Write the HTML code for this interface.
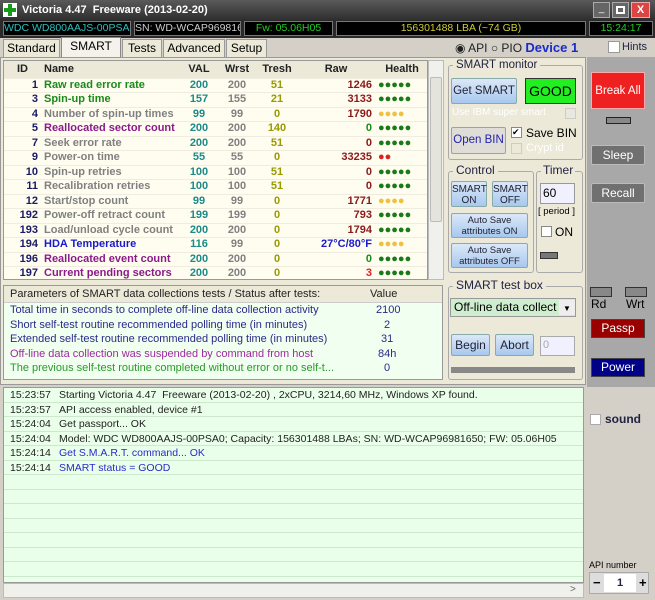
<!DOCTYPE html>
<html><head><style>
*{margin:0;padding:0;box-sizing:border-box}
body{width:655px;height:600px;overflow:hidden;background:#d4d0c8;font-family:"Liberation Sans",Tahoma,sans-serif;font-size:11px;position:relative}
.a{position:absolute;white-space:nowrap}
.title{left:0;top:0;width:655px;height:20px;background:linear-gradient(#5a5a5a,#2e2e2e);color:#fff;font-weight:bold;font-size:11px;line-height:20px;padding-left:22px}
.ib{top:21px;height:15px;background:#000;border:1px solid #777;font-size:10.5px;line-height:13px;text-align:center;overflow:hidden}
.tab{top:39px;height:18px;border:1px solid #999;border-bottom:none;background:#ece9d8;font-size:12px;line-height:17px;text-align:center}
table{border-collapse:collapse}
.sm td{height:14.5px;line-height:13px;border-bottom:1px solid #f0ede0;font-weight:bold;font-size:11px;padding:0 3px;white-space:nowrap}
.hd td{height:17px;background:#ece9d8;font-weight:bold;font-size:11px}
.btn{border:1px solid #8aa;border-radius:2px;background:linear-gradient(#dbe8f8,#a8c8ee);color:#223;text-align:center;font-size:11px}
.gb{border:1px solid #aaa;border-radius:3px}
.lg div{height:14.5px;border-bottom:1px solid #cde8cd;line-height:14px;font-size:10.5px;white-space:nowrap}
.lg span{display:inline-block;width:55px;padding-left:6px}
.dk{background:#707070;border:1px solid #bbb;border-radius:2px;color:#fff;text-align:center;font-size:12px}
</style></head><body>
<div class="a title">Victoria 4.47&nbsp; Freeware (2013-02-20)</div>
<div class="a" style="left:3px;top:3px;width:14px;height:14px;background:#fff"><div class="a" style="left:5px;top:1px;width:4px;height:12px;background:#1a9a1a"></div><div class="a" style="left:1px;top:5px;width:12px;height:4px;background:#1a9a1a"></div></div>
<div class="a" style="left:593px;top:2px;width:17px;height:16px;background:#666;border:1px solid #aaa;color:#fff;font-size:10px;text-align:center">_</div>
<div class="a" style="left:612px;top:2px;width:17px;height:16px;background:#666;border:1px solid #aaa"><div class="a" style="left:3px;top:3px;width:9px;height:8px;border:2px solid #fff"></div></div>
<div class="a" style="left:631px;top:2px;width:19px;height:16px;background:#d44;border:1px solid #eaa;color:#fff;font-weight:bold;text-align:center;line-height:14px">X</div>
<div class="a" style="left:0;top:20px;width:655px;height:18px;background:#2a2a2a"></div>
<div class="a ib" style="left:3px;width:128px;color:#3bb;">WDC WD800AAJS-00PSA0</div>
<div class="a ib" style="left:134px;width:107px;color:#ccc;">SN: WD-WCAP96981650</div>
<div class="a ib" style="left:244px;width:89px;color:#2c2;">Fw: 05.06H05</div>
<div class="a ib" style="left:336px;width:250px;color:#cc3;">156301488 LBA (~74 GB)</div>
<div class="a ib" style="left:589px;width:64px;color:#2c2;">15:24:17</div>
<div class="a tab" style="left:3px;width:57px">Standard</div>
<div class="a tab" style="left:61px;width:60px;top:37px;height:20px;background:#f4f2ea;border-color:#888">SMART</div>
<div class="a tab" style="left:122px;width:40px">Tests</div>
<div class="a tab" style="left:163px;width:62px">Advanced</div>
<div class="a tab" style="left:226px;width:41px">Setup</div>
<div class="a" style="left:455px;top:40px;font-size:12px;color:#222">◉ API ○ PIO <b style="color:#1a2acc;font-size:13px">Device 1</b></div>
<div class="a" style="left:608px;top:41px;width:12px;height:12px;background:#fff;border:1px solid #999"></div>
<div class="a" style="left:622px;top:41px;color:#224;font-size:11px">Hints</div>
<div class="a" style="left:0;top:57px;width:586px;height:328px;background:#ece9d8;border:1px solid #999"></div>
<div class="a" style="left:587px;top:57px;width:68px;height:330px;background:#a8a8a8"></div>
<div class="a" style="left:587px;top:387px;width:68px;height:213px;background:#d4d0c8"></div>
<div class="a" style="left:3px;top:60px;width:425px;height:220px;background:#fffdf0;border:1px solid #999;overflow:hidden">
<table class="sm" style="width:425px;color:#808080">
<colgroup><col style="width:37px"><col style="width:140px"><col style="width:36px"><col style="width:40px"><col style="width:40px"><col style="width:78px"><col></colgroup>
<tr class="hd" style="color:#222"><td style="text-align:center">ID</td><td>Name</td><td style="text-align:center">VAL</td><td style="text-align:center">Wrst</td><td style="text-align:center">Tresh</td><td style="text-align:center">Raw</td><td style="text-align:center">Health</td></tr>
<tr><td align=right style="color:#1a1a66">1</td><td style="color:#1a8a1a">Raw read error rate</td><td align=center style="color:#1a8a8a">200</td><td align=center>200</td><td align=center style="color:#999900">51</td><td align=right style="color:#8b1a1a">1246</td><td style="color:#1a7a1a">●●●●●</td></tr>
<tr><td align=right style="color:#1a1a66">3</td><td style="color:#1a8a1a">Spin-up time</td><td align=center style="color:#1a8a8a">157</td><td align=center>155</td><td align=center style="color:#999900">21</td><td align=right style="color:#8b1a1a">3133</td><td style="color:#1a7a1a">●●●●●</td></tr>
<tr><td align=right style="color:#1a1a66">4</td><td>Number of spin-up times</td><td align=center style="color:#1a8a8a">99</td><td align=center>99</td><td align=center style="color:#999900">0</td><td align=right style="color:#8b1a1a">1790</td><td style="color:#f0c040">●●●●</td></tr>
<tr><td align=right style="color:#1a1a66">5</td><td style="color:#8b1a8b">Reallocated sector count</td><td align=center style="color:#1a8a8a">200</td><td align=center>200</td><td align=center style="color:#999900">140</td><td align=right style="color:#1a8a1a">0</td><td style="color:#1a7a1a">●●●●●</td></tr>
<tr><td align=right style="color:#1a1a66">7</td><td>Seek error rate</td><td align=center style="color:#1a8a8a">200</td><td align=center>200</td><td align=center style="color:#999900">51</td><td align=right style="color:#8b1a1a">0</td><td style="color:#1a7a1a">●●●●●</td></tr>
<tr><td align=right style="color:#1a1a66">9</td><td>Power-on time</td><td align=center style="color:#1a8a8a">55</td><td align=center>55</td><td align=center style="color:#999900">0</td><td align=right style="color:#8b1a1a">33235</td><td style="color:#e02020">●●</td></tr>
<tr><td align=right style="color:#1a1a66">10</td><td>Spin-up retries</td><td align=center style="color:#1a8a8a">100</td><td align=center>100</td><td align=center style="color:#999900">51</td><td align=right style="color:#8b1a1a">0</td><td style="color:#1a7a1a">●●●●●</td></tr>
<tr><td align=right style="color:#1a1a66">11</td><td>Recalibration retries</td><td align=center style="color:#1a8a8a">100</td><td align=center>100</td><td align=center style="color:#999900">51</td><td align=right style="color:#8b1a1a">0</td><td style="color:#1a7a1a">●●●●●</td></tr>
<tr><td align=right style="color:#1a1a66">12</td><td>Start/stop count</td><td align=center style="color:#1a8a8a">99</td><td align=center>99</td><td align=center style="color:#999900">0</td><td align=right style="color:#8b1a1a">1771</td><td style="color:#f0c040">●●●●</td></tr>
<tr><td align=right style="color:#1a1a66">192</td><td>Power-off retract count</td><td align=center style="color:#1a8a8a">199</td><td align=center>199</td><td align=center style="color:#999900">0</td><td align=right style="color:#8b1a1a">793</td><td style="color:#1a7a1a">●●●●●</td></tr>
<tr><td align=right style="color:#1a1a66">193</td><td>Load/unload cycle count</td><td align=center style="color:#1a8a8a">200</td><td align=center>200</td><td align=center style="color:#999900">0</td><td align=right style="color:#8b1a1a">1794</td><td style="color:#1a7a1a">●●●●●</td></tr>
<tr><td align=right style="color:#1a1a66">194</td><td style="color:#1a1acc">HDA Temperature</td><td align=center style="color:#1a8a8a">116</td><td align=center>99</td><td align=center style="color:#999900">0</td><td align=right style="color:#1a1acc">27°C/80°F</td><td style="color:#f0c040">●●●●</td></tr>
<tr><td align=right style="color:#1a1a66">196</td><td style="color:#8b1a8b">Reallocated event count</td><td align=center style="color:#1a8a8a">200</td><td align=center>200</td><td align=center style="color:#999900">0</td><td align=right style="color:#1a8a1a">0</td><td style="color:#1a7a1a">●●●●●</td></tr>
<tr><td align=right style="color:#1a1a66">197</td><td style="color:#8b1a8b">Current pending sectors</td><td align=center style="color:#1a8a8a">200</td><td align=center>200</td><td align=center style="color:#999900">0</td><td align=right style="color:#e02020">3</td><td style="color:#1a7a1a">●●●●●</td></tr>
</table></div>
<div class="a" style="left:428px;top:60px;width:16px;height:220px;background:#f0f0ec;border:1px solid #bbb"><div class="a" style="left:1px;top:16px;width:12px;height:145px;background:#e4e4dc;border:1px solid #bbb;border-radius:2px"></div></div>
<div class="a" style="left:3px;top:285px;width:440px;height:95px;background:#f0fff0;border:1px solid #999">
<div style="height:17px;background:#ece9d8;border-bottom:1px solid #ccc;line-height:16px;padding-left:6px;font-size:11px;color:#222">Parameters of SMART data collections tests / Status after tests:<span class="a" style="left:366px">Value</span></div>
<div style="line-height:14.6px;padding-left:6px;font-size:11px">
<div style="color:#2a2a8a">Total time in seconds to complete off-line data collection activity<span class="a" style="left:372px">2100</span></div>
<div style="color:#2a2a8a">Short self-test routine recommended polling time (in minutes)<span class="a" style="left:380px">2</span></div>
<div style="color:#2a2a8a">Extended self-test routine recommended polling time (in minutes)<span class="a" style="left:377px">31</span></div>
<div style="color:#a02aa0">Off-line data collection was suspended by command from host<span class="a" style="left:374px;color:#2a2a8a">84h</span></div>
<div style="color:#2a9a2a">The previous self-test routine completed without error or no self-t...<span class="a" style="left:380px;color:#2a2a8a">0</span></div>
</div></div>
<!-- right panels -->
<div class="a gb" style="left:448px;top:65px;width:135px;height:95px"></div>
<div class="a" style="left:453px;top:59px;background:#ece9d8;padding:0 3px;color:#224;font-size:11.5px">SMART monitor</div>
<div class="a btn" style="left:451px;top:78px;width:66px;height:26px;line-height:24px;font-size:11.5px">Get SMART</div>
<div class="a" style="left:525px;top:78px;width:51px;height:26px;background:#22ee22;border:1px solid #333;text-align:center;line-height:24px;font-size:14px">GOOD</div>
<div class="a" style="left:452px;top:107px;color:#fff;font-size:10px">Use IBM super smart</div>
<div class="a" style="left:565px;top:108px;width:11px;height:11px;background:#e8e8e0;border:1px solid #ccc"></div>
<div class="a btn" style="left:451px;top:127px;width:55px;height:27px;line-height:25px;font-size:11.5px;background:#e0ddd8;color:#22a">Open BIN</div>
<div class="a" style="left:511px;top:127px;width:11px;height:11px;background:#fff;border:1px solid #888;font-size:9px;line-height:9px">✔</div>
<div class="a" style="left:526px;top:126px;font-size:12px">Save BIN</div>
<div class="a" style="left:511px;top:143px;width:11px;height:11px;border:1px solid #ccc"></div>
<div class="a" style="left:526px;top:142px;font-size:11px;color:#fff">Crypt id</div>
<div class="a gb" style="left:448px;top:171px;width:86px;height:102px"></div>
<div class="a" style="left:453px;top:163px;background:#ece9d8;padding:0 3px;font-size:12px;color:#224">Control</div>
<div class="a btn" style="left:451px;top:181px;width:36px;height:26px;font-size:10px;line-height:11px;padding-top:2px">SMART<br>ON</div>
<div class="a btn" style="left:492px;top:181px;width:36px;height:26px;font-size:10px;line-height:11px;padding-top:2px">SMART<br>OFF</div>
<div class="a btn" style="left:451px;top:213px;width:77px;height:25px;font-size:9.5px;line-height:11px;padding-top:1px">Auto Save<br>attributes ON</div>
<div class="a btn" style="left:451px;top:243px;width:77px;height:25px;font-size:9.5px;line-height:11px;padding-top:1px">Auto Save<br>attributes OFF</div>
<div class="a gb" style="left:536px;top:171px;width:47px;height:102px"></div>
<div class="a" style="left:541px;top:163px;background:#ece9d8;padding:0 2px;font-size:12px;color:#224">Timer</div>
<div class="a" style="left:540px;top:183px;width:35px;height:21px;background:#f0f0ff;border:1px solid #999;padding:2px;font-size:12px">60</div>
<div class="a" style="left:538px;top:206px;font-size:9.5px">[ period ]</div>
<div class="a" style="left:541px;top:226px;width:11px;height:11px;background:#fff;border:1px solid #888"></div>
<div class="a" style="left:555px;top:225px;font-size:12px">ON</div>
<div class="a" style="left:540px;top:252px;width:18px;height:7px;background:#777;border:1px solid #333"></div>
<div class="a gb" style="left:448px;top:286px;width:135px;height:94px"></div>
<div class="a" style="left:453px;top:278px;background:#ece9d8;padding:0 3px;font-size:12px;color:#224">SMART test box</div>
<div class="a" style="left:450px;top:298px;width:126px;height:19px;background:#cfeecf;border:1px solid #999;font-size:12px;line-height:17px;padding-left:3px">Off-line data collect<span class="a" style="left:108px;top:1px;width:16px;height:15px;background:#eee;font-size:8px;text-align:center">▼</span></div>
<div class="a btn" style="left:451px;top:334px;width:39px;height:22px;line-height:20px;font-size:12px">Begin</div>
<div class="a btn" style="left:495px;top:334px;width:39px;height:22px;line-height:20px;font-size:12px">Abort</div>
<div class="a" style="left:540px;top:336px;width:35px;height:20px;background:#f0f0ff;border:1px solid #aaa;color:#aaa;padding:2px;font-size:11px">0</div>
<div class="a" style="left:451px;top:367px;width:124px;height:6px;background:#888"></div>
<!-- far right -->
<div class="a" style="left:591px;top:72px;width:54px;height:37px;background:#ee2020;border:1px solid #faa;color:#fff;text-align:center;line-height:36px;font-size:11.5px">Break All</div>
<div class="a" style="left:606px;top:117px;width:25px;height:7px;background:#888;border:1px solid #222"></div>
<div class="a dk" style="left:591px;top:145px;width:54px;height:20px;line-height:18px">Sleep</div>
<div class="a dk" style="left:591px;top:183px;width:54px;height:20px;line-height:18px">Recall</div>
<div class="a" style="left:590px;top:287px;width:22px;height:10px;background:#888;border:1px solid #333"></div>
<div class="a" style="left:625px;top:287px;width:22px;height:10px;background:#888;border:1px solid #333"></div>
<div class="a" style="left:591px;top:297px;font-size:12px">Rd</div>
<div class="a" style="left:626px;top:297px;font-size:12px">Wrt</div>
<div class="a" style="left:591px;top:319px;width:54px;height:19px;background:#990000;border:1px solid #444;color:#fff;text-align:center;line-height:17px;font-size:12px">Passp</div>
<div class="a" style="left:591px;top:358px;width:54px;height:19px;background:#000088;border:1px solid #444;color:#fff;text-align:center;line-height:17px;font-size:12px">Power</div>
<div class="a" style="left:590px;top:414px;width:11px;height:11px;background:#fff;border:1px solid #aaa"></div>
<div class="a" style="left:605px;top:412px;font-weight:bold;color:#224;font-size:12px">sound</div>
<div class="a" style="left:589px;top:560px;font-size:9px">API number</div>
<div class="a" style="left:589px;top:572px;width:60px;height:22px;background:#ddd;border:1px solid #aaa"><span class="a" style="left:3px;top:2px;font-weight:bold;font-size:13px">−</span><div class="a" style="left:14px;top:1px;width:32px;height:18px;background:#fff;text-align:center;font-weight:bold;color:#224;line-height:18px">1</div><span class="a" style="left:49px;top:2px;font-weight:bold;font-size:13px">+</span></div>
<!-- log -->
<div class="a lg" style="left:3px;top:387px;width:581px;height:196px;background:#eaffea;border:1px solid #999;overflow:hidden;color:#222">
<div><span>15:23:57</span>Starting Victoria 4.47&nbsp; Freeware (2013-02-20) , 2xCPU, 3214,60 MHz, Windows XP found.</div>
<div><span>15:23:57</span>API access enabled, device #1</div>
<div><span>15:24:04</span>Get passport... OK</div>
<div><span>15:24:04</span>Model: WDC WD800AAJS-00PSA0; Capacity: 156301488 LBAs; SN: WD-WCAP96981650; FW: 05.06H05</div>
<div><span>15:24:14</span><b style="font-weight:normal;color:#2a2acc">Get S.M.A.R.T. command... OK</b></div>
<div><span>15:24:14</span><b style="font-weight:normal;color:#2a2acc">SMART status = GOOD</b></div>
<div></div><div></div><div></div><div></div><div></div><div></div><div></div>
</div>
<div class="a" style="left:3px;top:583px;width:581px;height:15px;background:#f0f0ec;border:1px solid #bbb"><span class="a" style="left:566px;top:0;font-size:10px;color:#666">&gt;</span></div>
</body></html>
